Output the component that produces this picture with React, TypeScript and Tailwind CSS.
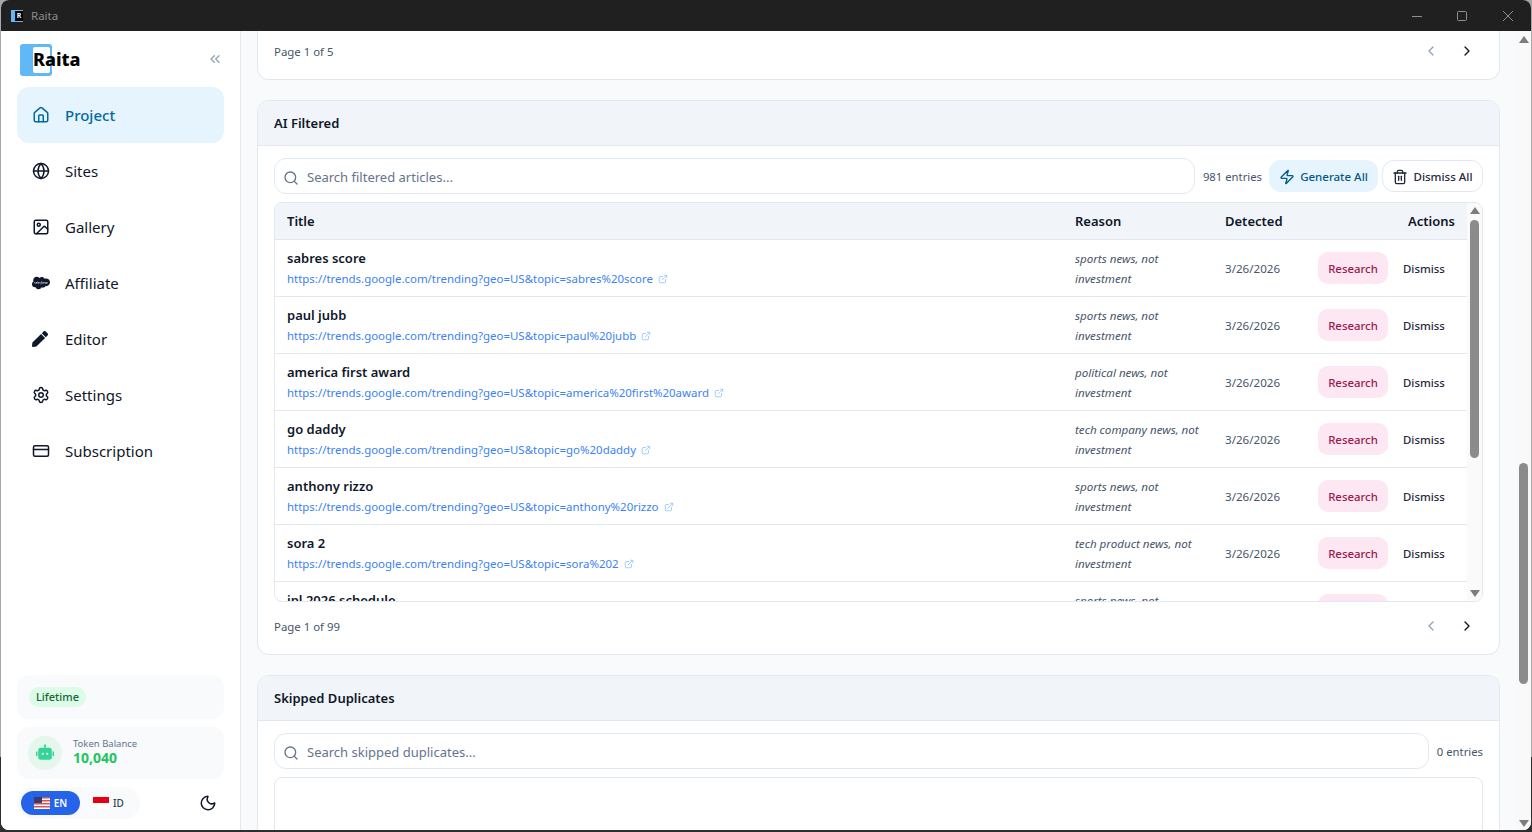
import { ChevronLeft, ChevronRight, ChevronsLeft, CreditCard, ExternalLink, Globe, Home, Image, Moon, Search, Settings, Trash2, Zap } from 'lucide-react';
import { FaPen, FaSalesforce } from 'react-icons/fa';
import { RiRobot2Fill } from 'react-icons/ri';

const font = "font-['Noto_Sans',sans-serif]";

const navItems = [
  { label: 'Project', icon: Home, size: 18, active: true },
  { label: 'Sites', icon: Globe, size: 18 },
  { label: 'Gallery', icon: Image, size: 18 },
  { label: 'Affiliate', icon: FaSalesforce, size: 18 },
  { label: 'Editor', icon: FaPen, size: 16 },
  { label: 'Settings', icon: Settings, size: 18 },
  { label: 'Subscription', icon: CreditCard, size: 18 },
];

const rows = [
  { title: 'sabres score', url: 'https://trends.google.com/trending?geo=US&topic=sabres%20score', reason: 'sports news, not investment' },
  { title: 'paul jubb', url: 'https://trends.google.com/trending?geo=US&topic=paul%20jubb', reason: 'sports news, not investment' },
  { title: 'america first award', url: 'https://trends.google.com/trending?geo=US&topic=america%20first%20award', reason: 'political news, not investment' },
  { title: 'go daddy', url: 'https://trends.google.com/trending?geo=US&topic=go%20daddy', reason: 'tech company news, not investment' },
  { title: 'anthony rizzo', url: 'https://trends.google.com/trending?geo=US&topic=anthony%20rizzo', reason: 'sports news, not investment' },
  { title: 'sora 2', url: 'https://trends.google.com/trending?geo=US&topic=sora%202', reason: 'tech product news, not investment' },
  { title: 'ipl 2026 schedule', url: 'https://trends.google.com/trending?geo=US&topic=ipl%202026%20schedule', reason: 'sports news, not investment' },
];

const UsFlag = () => (
  <svg width="16" height="12" viewBox="0 0 16 12">
    <rect width="16" height="12" fill="#fff" />
    <rect y="0" width="16" height="1.5" fill="#d9534f" />
    <rect y="3" width="16" height="1.5" fill="#d9534f" />
    <rect y="6" width="16" height="1.5" fill="#d9534f" />
    <rect y="9" width="16" height="1.5" fill="#d9534f" />
    <rect width="8" height="6" fill="#3c3b6e" />
  </svg>
);

const IdFlag = () => (
  <svg width="16" height="12" viewBox="0 0 16 12">
    <rect width="16" height="6" fill="#e70011" />
    <rect y="6" width="16" height="6" fill="#fff" />
  </svg>
);

const Pager = ({ label }: { label: string }) => (
  <div className="flex items-center justify-between">
    <span className="pt-[2px] text-[11.4px] leading-[14px] text-[#475569]">{label}</span>
    <div className="flex items-center gap-5 pr-[8px]">
      <ChevronLeft size={16} className="text-[#94a3b8]" />
      <ChevronRight size={16} className="text-[#0f172a]" />
    </div>
  </div>
);

const Sidebar = () => (
  <aside className="flex w-[240px] shrink-0 flex-col border-r border-[#e2e8f0] bg-white px-4">
    <div className="flex h-[56px] items-center justify-between pl-[3px] pr-[1px] pt-[2px]">
      <div className="relative flex h-[32px] w-[32px] items-center rounded-[3px] bg-[#60b8f6]">
        <div className="ml-[13px] h-[26px] w-[17px] rounded-[2px] bg-white" />
        <span className="absolute left-[13px] top-[2px] text-[18px] font-extrabold leading-[26px] text-black">Raita</span>
      </div>
      <ChevronsLeft size={16} className="-mt-[2px] text-[#94a3b8]" />
    </div>
    <nav className="flex flex-col">
      {navItems.map((item) => (
        <div
          key={item.label}
          className={`flex h-[56px] items-center rounded-xl pl-[15px] text-[15px] ${item.active ? 'bg-[#e6f4fe] font-medium text-[#0369a1]' : 'text-[#0f172a]'}`}
        >
          <div className="flex w-[33px] shrink-0 items-center">
            <item.icon size={item.size} />
          </div>
          <span>{item.label}</span>
        </div>
      ))}
    </nav>
    <div className="mt-auto flex flex-col gap-2 pb-[11px]">
      <div className="flex h-[44px] items-center rounded-xl bg-[#f8fafc] px-3">
        <span className="rounded-full bg-[#dcfce7] px-[7px] text-[11px] font-medium leading-5 text-[#166534]">Lifetime</span>
      </div>
      <div className="flex h-[52px] items-center gap-[11px] rounded-xl bg-[#f8fafc] px-[11px]">
        <div className="flex h-[34px] w-[34px] items-center justify-center rounded-full bg-[#e5f6ec]">
          <RiRobot2Fill size={18} className="text-[#34d399]" />
        </div>
        <div className="flex flex-col pb-[2px]">
          <span className="text-[9.5px] leading-[12px] text-[#64748b]">Token Balance</span>
          <span className="text-sm font-bold leading-[16px] text-[#22c55e]">10,040</span>
        </div>
      </div>
      <div className="flex items-center justify-between">
        <div className="flex h-[32px] w-[123px] items-center gap-[13px] rounded-full bg-[#f8fafc] px-[4px]">
          <div className="flex h-[24px] w-[59px] items-center justify-center gap-1 rounded-full bg-[#2563eb] text-[10px] font-semibold text-white">
            <UsFlag />
            EN
          </div>
          <div className="flex items-center gap-1 text-[10px] font-medium text-[#334155]">
            <IdFlag />
            ID
          </div>
        </div>
        <Moon size={18} className="mr-[7px] text-[#0f172a]" />
      </div>
    </div>
  </aside>
);

const Row = ({ title, url, reason }: { title: string; url: string; reason: string }) => (
  <div className="flex h-[57px] shrink-0 items-center border-b border-[#e2e8f0]">
    <div className="flex w-[800px] flex-col gap-[3px] pl-3">
      <span className="text-[13px] font-semibold leading-[18px] text-[#0f172a]">{title}</span>
      <span className="flex items-center gap-1 text-[11.45px] leading-[18px] text-[#3b82f6]">
        {url}
        <ExternalLink size={10} className="ml-[1px] text-[#93c5fd]" />
      </span>
    </div>
    <div className="w-[150px] pr-3 pt-[2px] text-[11.6px] italic leading-5 text-[#475569]">{reason}</div>
    <div className="w-[93px] pt-[2px] text-[11.6px] text-[#475569]">3/26/2026</div>
    <div className="flex h-8 w-[70px] items-center justify-center rounded-[10px] bg-[#fce7f3] pt-[2px] text-[11.4px] font-medium text-[#9d174d]">Research</div>
    <div className="ml-[15px] pt-[2px] text-[11.4px] font-medium text-[#1e293b]">Dismiss</div>
  </div>
);

const ScrollArrow = ({ up }: { up?: boolean }) => (
  <svg width="10" height="7" viewBox="0 0 10 7" className="shrink-0 text-[#7d7d7d]">
    <path d={up ? 'M5 0 10 7H0Z' : 'M0 0H10L5 7Z'} fill="currentColor" />
  </svg>
);

function App() {
  return (
    <div className={`${font} h-[832px] w-[1532px] bg-[linear-gradient(#a8a8a8_757px,#2e2e2e_757px)] pb-[2px] pl-[1px] pr-[1px]`}>
      <div className="flex h-full flex-col overflow-hidden rounded-lg bg-white">
        <header className="flex h-[31px] shrink-0 items-center justify-between bg-[#202020] pl-[10px] text-[11.5px] text-[#8b8b8b]">
          <div className="flex items-center gap-[8px]">
            <div className="flex h-3 w-3 items-center justify-end bg-[#60b8f6]">
              <div className="flex h-[10px] w-[8px] items-center justify-center bg-black text-[7px] font-bold leading-none text-white">R</div>
            </div>
            <span>Raita</span>
          </div>
          <div className="flex items-center pr-[18px]">
            <svg width="10" height="10" viewBox="0 0 10 10" fill="none" stroke="#8f8f8f">
              <path d="M0 5.5H10" />
            </svg>
            <svg width="10" height="10" viewBox="0 0 10 10" fill="none" stroke="#8f8f8f" className="ml-[35px]">
              <rect x="0.5" y="0.5" width="9" height="9" rx="1" />
            </svg>
            <svg width="10" height="10" viewBox="0 0 10 10" fill="none" stroke="#8f8f8f" className="ml-[36px]">
              <path d="M0 0 10 10M10 0 0 10" />
            </svg>
          </div>
        </header>
        <div className="flex min-h-0 flex-1">
          <Sidebar />
          <main className="flex min-w-0 flex-1 overflow-hidden bg-[#f8fafc]">
            <div className="flex min-w-0 flex-1 flex-col gap-5 overflow-hidden px-4">
              <section className="h-[49px] shrink-0 rounded-b-xl border border-t-0 border-[#e2e8f0] bg-white px-4 pt-[12px]">
                <Pager label="Page 1 of 5" />
              </section>

              <section className="shrink-0 overflow-hidden rounded-xl border border-[#e2e8f0] bg-white">
                <div className="flex h-[45px] items-center border-b border-[#e2e8f0] bg-[#f1f5f9] px-4 pt-[2px] text-[13px] font-semibold text-[#0f172a]">AI Filtered</div>
                <div className="px-4 pt-3">
                  <div className="flex items-center">
                    <div className="flex h-9 flex-1 items-center gap-[8px] rounded-xl border border-[#e2e8f0] pl-[8px] pt-[4px] text-[13px] text-[#64748b]">
                      <Search size={16} />
                      <span>Search filtered articles...</span>
                    </div>
                    <span className="ml-2 pt-[2px] text-[11.3px] text-[#475569]">981 entries</span>
                    <div className="ml-[7px] flex h-8 w-[109px] items-center justify-center gap-[5px] rounded-xl bg-[#e6f4fe] pt-[2px] text-[11.5px] font-medium text-[#075985]">
                      <Zap size={16} />
                      Generate All
                    </div>
                    <div className="ml-1 flex h-8 w-[101px] items-center justify-center gap-[5px] rounded-xl border border-[#e2e8f0] pt-[2px] text-[11.5px] font-medium text-[#1e293b]">
                      <Trash2 size={16} />
                      Dismiss All
                    </div>
                  </div>
                  <div className="mt-2 flex h-[400px] overflow-hidden rounded-lg border border-[#e2e8f0]">
                    <div className="flex min-w-0 flex-1 flex-col overflow-hidden">
                      <div className="flex h-[37px] shrink-0 items-center border-b border-[#e2e8f0] bg-[#f1f5f9] pt-[2px] text-[13px] font-semibold text-[#0f172a]">
                        <div className="w-[800px] pl-3">Title</div>
                        <div className="w-[150px]">Reason</div>
                        <div className="flex-1">Detected</div>
                        <div className="pr-3">Actions</div>
                      </div>
                      {rows.map((row) => (
                        <Row key={row.title} {...row} />
                      ))}
                    </div>
                    <div className="flex w-[15px] shrink-0 flex-col items-center bg-[#fafafa] pb-[4px] pt-[4px]">
                      <ScrollArrow up />
                      <div className="mt-[6px] h-[238px] w-[9px] rounded-full bg-[#8b8b8b]" />
                      <div className="flex-1" />
                      <ScrollArrow />
                    </div>
                  </div>
                  <div className="h-[52px] pt-[16px]">
                    <Pager label="Page 1 of 99" />
                  </div>
                </div>
              </section>

              <section className="shrink-0 overflow-hidden rounded-xl border border-[#e2e8f0] bg-white">
                <div className="flex h-[45px] items-center border-b border-[#e2e8f0] bg-[#f1f5f9] px-4 pt-[2px] text-[13px] font-semibold text-[#0f172a]">Skipped Duplicates</div>
                <div className="px-4 pt-3">
                  <div className="flex items-center">
                    <div className="flex h-9 flex-1 items-center gap-[8px] rounded-xl border border-[#e2e8f0] pl-[8px] pt-[4px] text-[13px] text-[#64748b]">
                      <Search size={16} />
                      <span>Search skipped duplicates...</span>
                    </div>
                    <span className="ml-2 pt-[2px] text-[11.3px] text-[#475569]">0 entries</span>
                  </div>
                  <div className="mt-2 h-[200px] rounded-lg border border-[#e2e8f0]" />
                </div>
              </section>
            </div>
            <div className="flex w-[15px] shrink-0 flex-col items-center bg-[#f9f9f9] pb-[3px] pt-[5px]">
              <ScrollArrow up />
              <div className="mt-[420px] h-[221px] w-[9px] rounded-full bg-[#8b8b8b]" />
              <div className="flex-1" />
              <ScrollArrow />
            </div>
          </main>
        </div>
      </div>
    </div>
  );
}

export default App;
